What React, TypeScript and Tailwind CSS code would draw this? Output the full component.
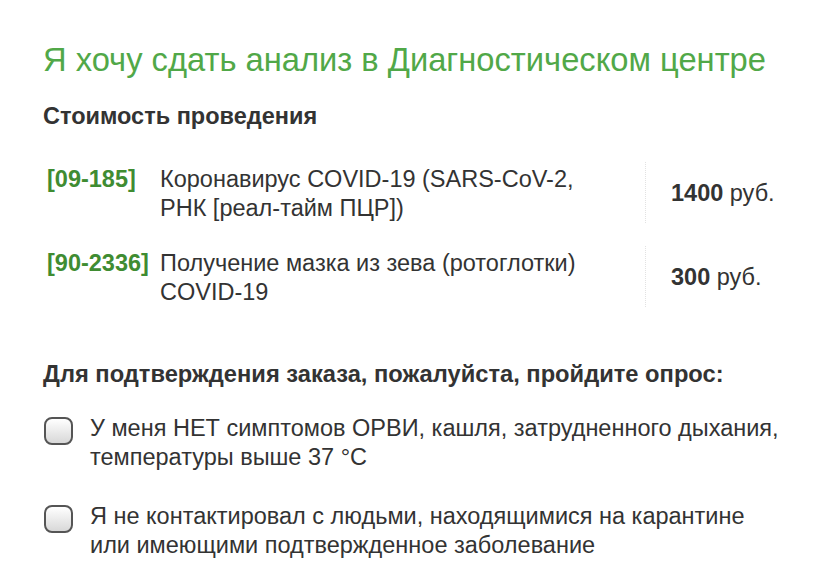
import React from 'react';

const ROWS = [
  { code: '[09-185]', name: ['Коронавирус COVID-19 (SARS-CoV-2,', 'РНК [реал-тайм ПЦР])'], price: '1400' },
  { code: '[90-2336]', name: ['Получение мазка из зева (ротоглотки)', 'COVID-19'], price: '300' },
];

const QUESTIONS = [
  ['У меня НЕТ симптомов ОРВИ, кашля, затрудненного дыхания,', 'температуры выше 37 °C'],
  ['Я не контактировал с людьми, находящимися на карантине', 'или имеющими подтвержденное заболевание'],
];

function Checkbox() {
  return (
    <span className="mt-[3px] w-[29px] h-[28px] shrink-0 rounded-[8px] border-2 border-[#555] bg-gradient-to-b from-[#ffffff] to-[#d8d8d8]" />
  );
}

export default function App() {
  return (
    <div className="w-[829px] h-[577px] bg-white text-[#333] font-['Liberation_Sans',Arial,sans-serif] px-[43px] pt-[40px] overflow-hidden">
      <h1 className="text-[32.7px] leading-[40px] text-[#51a848] whitespace-nowrap">
        Я хочу сдать анализ в Диагностическом центре
      </h1>

      <h2 className="mt-[23px] text-[23.5px] leading-[26px] font-bold">Стоимость проведения</h2>

      {/* ── Price table ── */}
      <div className="mt-[33px] flex flex-col gap-[23px]">
        {ROWS.map((r) => (
          <div key={r.code} className="flex items-stretch">
            <div className="w-[117px] pl-[4px] pt-[3px] text-[23.5px] leading-[29px] font-bold text-[#3f8c32]">
              {r.code}
            </div>
            <div className="w-[485px] pt-[3px] text-[23.5px] leading-[29px] whitespace-nowrap">
              {r.name.map((l) => (
                <div key={l}>{l}</div>
              ))}
            </div>
            <div className="border-l border-dotted border-[#e2e2e2] flex items-center pl-[25px] pt-[2px] text-[23.5px]">
              <span className="font-bold">{r.price}</span>&nbsp;руб.
            </div>
          </div>
        ))}
      </div>

      <h2 className="mt-[54px] text-[23.7px] leading-[26px] font-bold whitespace-nowrap">
        Для подтверждения заказа, пожалуйста, пройдите опрос:
      </h2>

      {/* ── Survey ── */}
      <div className="mt-[27px] flex flex-col gap-[30px]">
        {QUESTIONS.map((q) => (
          <label key={q[0]} className="flex gap-[17px] pl-[1px]">
            <Checkbox />
            <div className="text-[23.5px] leading-[29px] whitespace-nowrap">
              {q.map((l) => (
                <div key={l}>{l}</div>
              ))}
            </div>
          </label>
        ))}
      </div>
    </div>
  );
}
